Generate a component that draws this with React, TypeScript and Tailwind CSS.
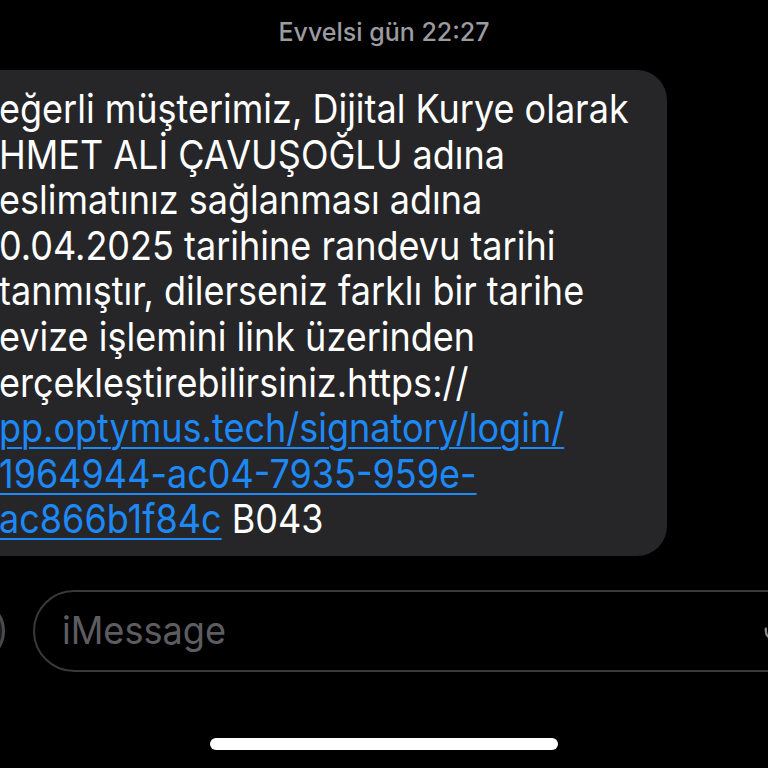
import { Mic } from 'lucide-react';

const lines: { text: string; link?: boolean; tail?: string }[] = [
  { text: 'eğerli müşterimiz, Dijital Kurye olarak' },
  { text: 'HMET ALİ ÇAVUŞOĞLU adına' },
  { text: 'eslimatınız sağlanması adına' },
  { text: '0.04.2025 tarihine randevu tarihi' },
  { text: 'tanmıştır, dilerseniz farklı bir tarihe' },
  { text: 'evize işlemini link üzerinden' },
  { text: 'erçekleştirebilirsiniz.https://' },
  { text: 'pp.optymus.tech/signatory/login/', link: true },
  { text: '1964944-ac04-7935-959e-', link: true },
  { text: 'ac866b1f84c', link: true, tail: ' B043' },
];

export default function App() {
  return (
    <div className="h-[768px] w-[768px] overflow-hidden bg-black font-['Inter','Roboto',sans-serif]">
      {/* tarih */}
      <div className="flex h-[70px] justify-center pt-[17px]">
        <div className="text-[25px] leading-[30px] font-medium text-[#9b9ba0]">
          Evvelsi gün 22:27
        </div>
      </div>

      {/* mesaj balonu */}
      <div className="ml-[-40px] w-[707px] rounded-[30px] bg-[#262628] pb-[14px] pl-[39px] pt-[16px]">
        {lines.map((line, i) => (
          <div
            key={i}
            className="origin-left scale-x-[0.9] whitespace-nowrap text-[40px] leading-[45.6px] text-white"
          >
            {line.link ? (
              <span className="text-[#1d89f7] underline decoration-[2px] underline-offset-[5px]">
                {line.text}
              </span>
            ) : (
              line.text
            )}
            {line.tail}
          </div>
        ))}
      </div>

      {/* giriş alanı */}
      <div className="mt-[34px] flex items-center gap-[28px]">
        <div className="ml-[-59px] h-[64px] w-[64px] shrink-0 rounded-full border-[3px] border-[#4a4a4e] bg-[#1c1c1e]" />
        <div className="flex h-[82px] w-[777px] shrink-0 items-center rounded-full border-2 border-[#39393b] pl-[27px] pr-[20px]">
          <div className="flex-1 origin-left scale-x-[0.95] text-[38px] text-[#5d5d61]">
            iMessage
          </div>
          <Mic className="h-[30px] w-[28px] text-[#8a8a8e]" strokeWidth={2} />
        </div>
      </div>

      {/* ana ekran çubuğu */}
      <div className="mt-[66px] flex justify-center">
        <div className="h-[12px] w-[348px] rounded-full bg-white" />
      </div>
    </div>
  );
}
